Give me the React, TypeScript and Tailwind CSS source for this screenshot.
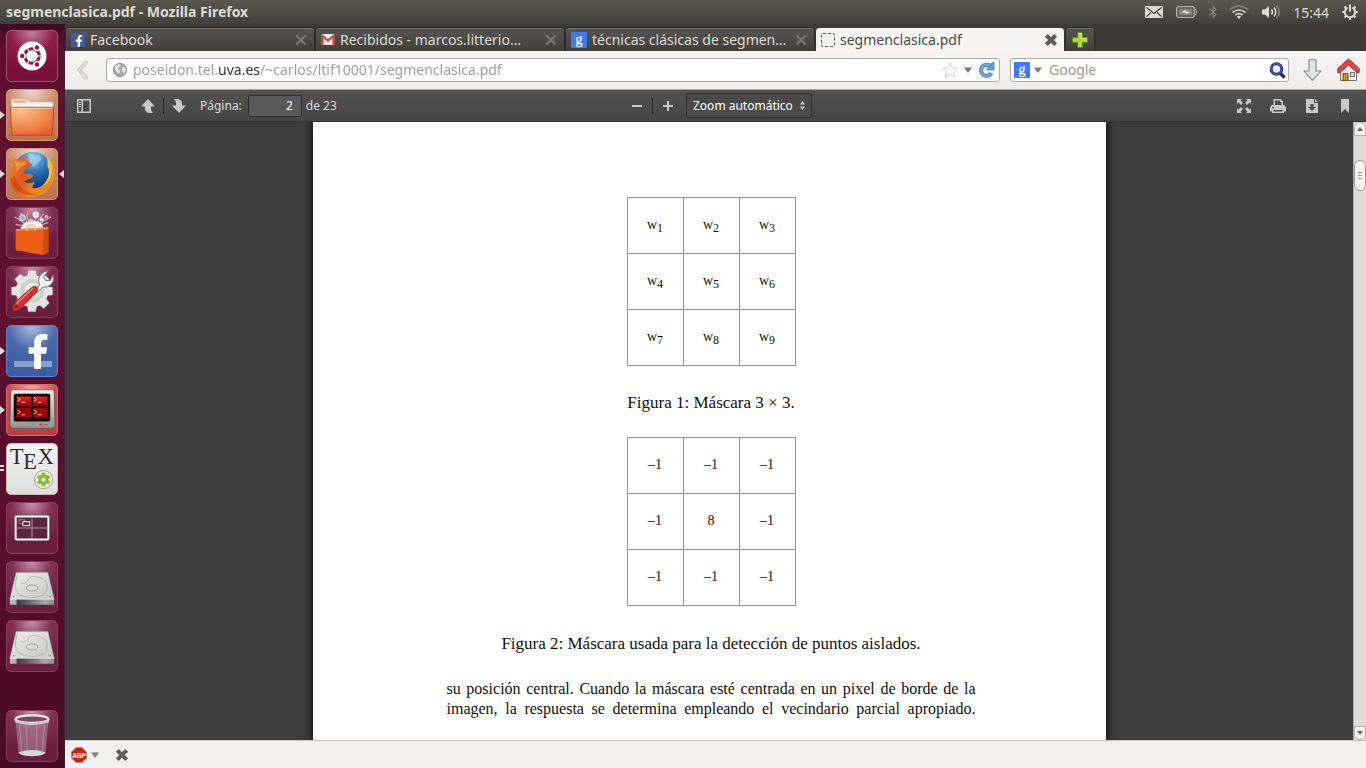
import React from "react";
import { FaFacebookF } from "react-icons/fa";

const ui = "font-['Noto_Sans',sans-serif]";

/* ---------- launcher icons (52 x 52 grid) ---------- */

function Art({ children }: { children: React.ReactNode }) {
  return (
    <svg viewBox="0 0 52 52" className="size-full" aria-hidden="true">
      {children}
    </svg>
  );
}

const DashIcon = () => (
  <Art>
    <circle cx="26" cy="26" r="15" fill="#fff" />
    <circle cx="26" cy="26" r="7.6" fill="none" stroke="#8b1b48" strokeWidth="3.2" />
    {[180, 300, 60].map((a) => (
      <g key={a} transform={`rotate(${a} 26 26)`}>
        <circle cx="36" cy="26" r="3.6" fill="#fff" />
        <circle cx="36.2" cy="26" r="2.3" fill="#8b1b48" />
      </g>
    ))}
    {[0, 120, 240].map((a) => (
      <path key={a} d="M30 26h8" transform={`rotate(${a} 26 26)`} stroke="#fff" strokeWidth="1.2" />
    ))}
  </Art>
);

const FolderIcon = () => (
  <Art>
    <defs>
      <radialGradient id="fold" cx="0.25" cy="0.1" r="1.1">
        <stop offset="0" stopColor="#f9c48a" />
        <stop offset="0.55" stopColor="#f08a4c" />
        <stop offset="1" stopColor="#e8542a" />
      </radialGradient>
    </defs>
    <path d="M4.500 11.500q0-2 2-2h14l3.500 3h23q1 0 1 1V20h-43.500z" fill="#f4f1ee" stroke="#c9b8ac" strokeWidth=".7" />
    <rect x="6.500" y="11" width="13" height="2.200" fill="#f2a26c" />
    <path d="M3.500 18h45l-1.500 29h-42z" fill="url(#fold)" stroke="#b5441c" strokeWidth=".9" />
    <path d="M4.500 19h43" stroke="#ffd9b0" strokeWidth=".8" />
  </Art>
);

const FirefoxIcon = () => (
  <Art>
    <defs>
      <radialGradient id="globe" cx="0.5" cy="0.15" r="0.85">
        <stop offset="0" stopColor="#8fd0f2" />
        <stop offset="0.45" stopColor="#2f74b8" />
        <stop offset="1" stopColor="#0a2c68" />
      </radialGradient>
      <linearGradient id="fox" x1="0" y1="0" x2="1" y2="1">
        <stop offset="0" stopColor="#f08a30" />
        <stop offset="0.5" stopColor="#e0561b" />
        <stop offset="1" stopColor="#f7a422" />
      </linearGradient>
    </defs>
    <circle cx="27" cy="23" r="20" fill="url(#globe)" />
    <path d="M22 5q5-1 7 2l5-1 2 5-4 3-3 5-4-2-2-6z" fill="#bfe3f6" opacity=".4" />
    <path d="M41 8q2 5 1 9 4 9-1 16-4 7-11 8-3 5-9 6 15 4 22-6 8-9 5-21-2-7-7-12z" fill="#f8c430" />
    <path d="M47 18q1 13-7 19-5 4-12 4l-4 7q13 1 20-8 7-9 3-22z" fill="#ee8420" />
    <path d="M6 8q4 4 8 3l7-4q-1 4 1 6l4 3q-1 3-6 4-3 2-2 6 4-1 9 1 0 3-4 4-3 1-5 3 4 3 11 0l-3 6q3 2 7 1-4 6-10 6 3 2 8 1-7 4-15 2Q4 46 3 31 2 24 5 19l1 2q-2-6 0-13z" fill="url(#fox)" />
    <path d="M3 29q2 12 13 17 8 3 15 1-11-1-16-7-6-6-7-12l-3 3z" fill="#c7400f" opacity=".65" />
    <path d="M8 12q4 3 8 2l3-2v4q-6 2-9 8z" fill="#f8b05c" opacity=".6" />
  </Art>
);

const BagIcon = () => (
  <Art>
    <path d="M26 21 8 9M26 21 14 5M26 21 20 7M26 21 32 5M26 21 38 6M26 21 46 9M26 21 43 15M26 21 9 17" stroke="#e7c6d2" strokeWidth="1.300" opacity=".75" />
    <path d="M14 22q3-9 8-7 3-5 7-1 6-2 9 7z" fill="#fff5ee" />
    <circle cx="16" cy="10" r="3" fill="#8fb3d0" stroke="#e8eef2" />
    <circle cx="30" cy="7" r="3" fill="#d9d9d9" stroke="#fff" />
    <circle cx="41" cy="9" r="2" fill="#cbb3bf" />
    <circle cx="22" cy="6" r="1.600" fill="#f08b60" />
    <circle cx="36" cy="12" r="2.200" fill="#eadfe4" />
    <circle cx="25" cy="13" r="2" fill="#b7cddb" />
    <path d="m9 22 34-2v26l-6 3-28-5z" fill="#ee5b14" />
    <path d="m38 20 5 0v26l-6 3z" fill="#d04a0c" />
    <path d="m9 22 34-2-1 2-32 2z" fill="#f88b4d" />
    <path d="M21 24v-4q0-2 2-2h4q2 0 2 2v4" fill="none" stroke="#f7c5a5" strokeWidth="1.600" />
  </Art>
);

const SettingsIcon = () => (
  <Art>
    <g fill="#e4e4e2" stroke="#8b8b89" strokeWidth=".4">
      {[0, 45, 90, 135, 180, 225, 270, 315].map((a) => (
        <path key={a} d="M21 10 22 3.500h8L31 10z" transform={`rotate(${a} 26 25)`} />
      ))}
      <circle cx="26" cy="25" r="17" stroke="none" />
    </g>
    <circle cx="26" cy="25" r="12.500" fill="#cfcfcd" />
    <circle cx="26" cy="25" r="8" fill="#f0f0ee" />
    <path d="m28 25 6-6q-3-7 2-12 3-3 7-3l-5 6 2 4 5 0 3-6q2 6-2 10-4 4-9 3l-6 6z" fill="#f2f2f0" stroke="#767674" strokeWidth="1" />
    <path d="M6 44q-2-3 2-7l18-16q3-2 5 0t0 5L13 44q-4 4-7 0z" fill="#d3302c" stroke="#8a1414" strokeWidth=".8" />
    <path d="M10 38 27 22" stroke="#f08a80" strokeWidth="1.500" />
    <circle cx="9.500" cy="41.500" r="1.500" fill="#5d0b0b" />
  </Art>
);

const FacebookTile = () => (
  <div className="relative flex size-full items-start justify-end">
    <span className="absolute bottom-[9px] left-[7px] h-[6px] w-[38px] bg-[#8ba0d0]" />
    <FaFacebookF className="relative mt-[8px] mr-[8px] h-[35px] w-[22px] text-white" aria-hidden="true" />
  </div>
);

const TerminalIcon = () => (
  <Art>
    <defs>
      <linearGradient id="mon" x1="0" y1="0" x2="0" y2="1">
        <stop offset="0" stopColor="#f0efeb" />
        <stop offset="1" stopColor="#92918b" />
      </linearGradient>
      <linearGradient id="pane" x1="0" y1="0" x2="0" y2="1">
        <stop offset="0" stopColor="#f0201c" />
        <stop offset="1" stopColor="#8c0405" />
      </linearGradient>
    </defs>
    <path d="M6 5h41q2 0 2 3l1 34q0 3-4 3H7q-4 0-4-3L4 8q0-3 2-3z" fill="url(#mon)" stroke="#55544f" strokeWidth=".7" />
    <rect x="7" y="9" width="38" height="29" rx="2" fill="#190303" />
    <path d="M10 12h15v10H10zM27 12h15v10H27z" fill="url(#pane)" />
    <path d="M10 24h15v10H10zM27 24h15v10H27z" fill="#990708" />
    {[[11, 13], [28, 13], [11, 26], [28, 26]].map(([x, y]) => (
      <path key={`${x}-${y}`} d={`m${x} ${y} 3 2-3 2m4 1h4`} fill="none" stroke="#ffb9ad" strokeWidth="1" />
    ))}
    <circle cx="35" cy="41" r="1.200" fill="#e2231a" />
    <path d="M38 41h4" stroke="#66655f" />
  </Art>
);

const TexIcon = () => (
  <Art>
    <g fill="#2d2d2d" fontFamily="Liberation Serif, serif" fontSize="23">
      <text x="3" y="21">T</text>
      <text x="17" y="26">E</text>
      <text x="32" y="21">X</text>
    </g>
    <circle cx="38" cy="37" r="9.500" fill="#e9e9e5" stroke="#a3a39c" strokeWidth="1" />
    <g fill="#86bd2a">
      {[0, 60, 120, 180, 240, 300].map((a) => (
        <path key={a} d="M35.500 33.500 36.500 30h3l1 3.500z" transform={`rotate(${a} 38 37)`} />
      ))}
    </g>
    <circle cx="38" cy="37" r="3.500" fill="none" stroke="#86bd2a" strokeWidth="2.500" />
  </Art>
);

const WorkspaceIcon = () => (
  <Art>
    <rect x="9" y="14" width="34" height="24" rx=".5" fill="#5a2440" stroke="#fff" strokeWidth="2" />
    <path d="M26 15v22M10 26h32" stroke="#b39aa6" strokeWidth="1" />
    <rect x="12.500" y="17.500" width="6" height="4" fill="none" stroke="#a58c99" />
    <rect x="16.500" y="19.500" width="7" height="4" fill="#5a2440" stroke="#fff" />
  </Art>
);

const DriveIcon = () => (
  <Art>
    <defs>
      <linearGradient id="drv" x1="0" y1="0" x2="1" y2="1">
        <stop offset="0" stopColor="#eeeeec" />
        <stop offset="1" stopColor="#c6c6c4" />
      </linearGradient>
      <linearGradient id="edge">
        <stop offset="0" stopColor="#b5b5b3" />
        <stop offset=".12" stopColor="#b5b5b3" />
        <stop offset=".18" stopColor="#3c3c3c" />
        <stop offset=".8" stopColor="#a8a8a6" />
        <stop offset="1" stopColor="#8d8d8b" />
      </linearGradient>
    </defs>
    <path d="M9.500 11h33l6.500 27.500H3z" fill="url(#drv)" stroke="#a0a09e" strokeWidth=".5" />
    <path d="M3 38.500h46v6H3z" fill="url(#edge)" />
    <path d="M3 38.500h46" stroke="#fafafa" />
    <path d="M11 13q-5 14 1 20 5 4 14 4 16 0 16-12 0-9-15-10-4 0-6 5-2 3-7 2" fill="none" stroke="#b2b2b0" strokeWidth=".9" />
    <ellipse cx="26" cy="27" rx="6" ry="3.200" fill="#dcdcda" stroke="#989896" strokeWidth=".9" />
    <circle cx="7" cy="36" r=".8" fill="#777" />
    <circle cx="45" cy="36" r=".8" fill="#777" />
  </Art>
);

const TrashIcon = () => (
  <Art>
    <path d="m9 10 3 34q14 6 28 0l3-34z" fill="#b78fa2" opacity=".55" />
    <path d="m13 14 2 27M20 15l1 27M31 15v27M39 14l-2 27" stroke="#d9c2cd" strokeWidth=".8" opacity=".5" />
    <path d="M12 43q14-5 28 0-2 4-14 4t-14-4z" fill="#d5d9d3" />
    <ellipse cx="26" cy="8.500" rx="17" ry="4" fill="#7a4a60" stroke="#e9ebe7" strokeWidth="2.500" />
    <path d="M8.500 9v3q17 5 35 0V9q-17 6-35 0z" fill="#cdd0ca" />
  </Art>
);

type App = { name: string; tile: string; mark?: "run" | "active" | "double"; icon: React.ReactNode };

const glass = "bg-[radial-gradient(circle_at_50%_0%,#c793a8_0%,#803257_35%,#6b1f40_70%)] border-[#8a3a5a]";
const copper = "bg-[radial-gradient(circle_at_50%_0%,#eed9cc_0%,#c98a68_45%,#b87049_100%)] border-[#d59a77]";

const apps: App[] = [
  { name: "Inicio", tile: "bg-[radial-gradient(circle_at_50%_0%,#c4809c_0%,#8b1d48_40%,#7a0e38_80%)] border-[#a84e72]", icon: <DashIcon /> },
  { name: "Archivos", tile: copper, mark: "run", icon: <FolderIcon /> },
  { name: "Firefox", tile: copper, mark: "active", icon: <FirefoxIcon /> },
  { name: "Centro de software", tile: glass, icon: <BagIcon /> },
  { name: "Configuración", tile: glass, icon: <SettingsIcon /> },
  { name: "Facebook", tile: "bg-[radial-gradient(circle_at_50%_0%,#a9bbe0_0%,#4767a8_45%,#3c5a9c_100%)] border-[#5d86d6]", mark: "run", icon: <FacebookTile /> },
  { name: "Terminator", tile: "bg-[radial-gradient(circle_at_50%_0%,#e9a8a8_0%,#c34a50_45%,#b83c44_100%)] border-[#d76a6c]", mark: "run", icon: <TerminalIcon /> },
  { name: "Texmaker", tile: "bg-[linear-gradient(#f4f4f2,#dededc)] border-[#c4c2ae]", mark: "double", icon: <TexIcon /> },
  { name: "Áreas de trabajo", tile: glass, icon: <WorkspaceIcon /> },
  { name: "Disco 1", tile: glass, icon: <DriveIcon /> },
  { name: "Disco 2", tile: glass, icon: <DriveIcon /> },
];

function Tile({ app }: { app: App }) {
  return (
    <li className="relative flex justify-center">
      {(app.mark === "run" || app.mark === "active") && (
        <svg viewBox="0 0 5 8" className="absolute top-[22px] left-0 h-2 w-[5px]" aria-hidden="true">
          <path d="M0 0v8l5-4z" fill="#dedbd8" />
        </svg>
      )}
      {app.mark === "active" && (
        <svg viewBox="0 0 5 8" className="absolute top-[22px] right-0 h-2 w-[5px]" aria-hidden="true">
          <path d="M5 0v8L0 4z" fill="#dedbd8" />
        </svg>
      )}
      {app.mark === "double" && <span className="absolute top-[22px] left-0 h-[6px] w-[4px] border-y-2 border-[#dedbd8]" />}
      <button aria-label={app.name} className={`size-[52px] overflow-hidden rounded-[5px] border ${app.tile}`}>
        {app.icon}
      </button>
    </li>
  );
}

/* ---------- small icons ---------- */

const CloseX = ({ className }: { className: string }) => (
  <svg viewBox="0 0 12 12" className={className} aria-hidden="true">
    <path d="m2 2 8 8M10 2l-8 8" stroke="currentColor" strokeLinecap="butt" />
  </svg>
);

const Caret = ({ className = "" }: { className?: string }) => (
  <svg viewBox="0 0 8 6" className={`h-[6px] w-2 ${className}`} aria-hidden="true">
    <path d="M0 .5h8L4 6z" fill="#7b7b78" />
  </svg>
);

const FacebookFav = () => (
  <span className="flex size-[14px] items-end justify-end bg-[#3f5aa0]">
    <FaFacebookF className="mr-[2px] h-[12px] w-[8px] text-white" aria-hidden="true" />
  </span>
);

const GmailFav = () => (
  <svg viewBox="0 0 14 12" className="h-3 w-[14px]" aria-hidden="true">
    <path d="M1 0h12v11H1z" fill="#f1eeec" />
    <path d="m1 11 5-5M13 11 8 6" stroke="#cfc9c6" strokeWidth=".8" />
    <path d="M0 1q0-1 1-1l6 5 6-5q1 0 1 1v10h-2.500V4L7 8 2.500 4v7H0z" fill="#da4437" />
  </svg>
);

const GoogleFav = () => (
  <svg viewBox="0 0 16 16" className="size-4" aria-hidden="true">
    <rect width="16" height="16" rx="1" fill="#4178f2" />
    <text x="8" y="12" textAnchor="middle" fontFamily="Liberation Serif, serif" fontSize="14" fill="#fff" stroke="#fff" strokeWidth=".3">g</text>
  </svg>
);

const DashedFav = () => <span className="size-[14px] rounded-[2px] border border-dashed border-[#5a5a58]" />;

const tabs = [
  { title: "Facebook", icon: <FacebookFav /> },
  { title: "Recibidos - marcos.litterio…", icon: <GmailFav /> },
  { title: "técnicas clásicas de segmen…", icon: <GoogleFav /> },
  { title: "segmenclasica.pdf", icon: <DashedFav />, active: true },
];

function SystemTray() {
  return (
    <div className="flex items-center gap-3">
      <svg viewBox="0 0 18 12" className="h-3 w-[18px]" aria-hidden="true">
        <rect width="18" height="12" rx="1" fill="#dfdbd2" />
        <path d="m1.500 1.500 7.500 6 7.500-6M1.500 10.500 6 6.500M16.500 10.500 12 6.500" fill="none" stroke="#45433d" strokeWidth="1.200" />
      </svg>
      <svg viewBox="0 0 21 12" className="ml-px h-3 w-[21px]" aria-hidden="true">
        <rect x=".7" y=".7" width="17.600" height="10.600" rx="2" fill="none" stroke="#b5b1a8" strokeWidth="1.300" />
        <rect x="2.500" y="2.500" width="14" height="7" fill="#85827a" />
        <path d="M19 3.500q1.500 0 1.500 1v3q0 1-1.500 1" fill="none" stroke="#b5b1a8" />
        <path d="m5 6.500 5-3-.5 2 5 .5-5 2.500.5-2z" fill="#efece6" />
      </svg>
      <svg viewBox="0 0 8 14" className="h-[14px] w-2" aria-hidden="true">
        <path d="m.5 3.500 6.500 6-3 3V1.500l3 3-6.500 6" fill="none" stroke="#8a877e" strokeWidth="1.100" />
      </svg>
      <svg viewBox="0 0 20 14" className="h-[14px] w-5" aria-hidden="true">
        <g fill="none" stroke="#dfdbd2" strokeWidth="1.600">
          <path d="M.8 4.500q9.200-7 18.400 0" stroke="#8a877e" />
          <path d="M3.500 7.500q6.500-5 13 0" />
          <path d="M6.300 10.200q3.700-3 7.400 0" />
        </g>
        <path d="M7.800 11.500q2.200-1.500 4.400 0L10 14z" fill="#dfdbd2" />
      </svg>
      <svg viewBox="0 0 20 16" className="h-4 w-5" aria-hidden="true">
        <path d="M1 5.500h3L8 2v12L4 10.500H1z" fill="#dfdbd2" />
        <g fill="none" strokeWidth="1.500">
          <path d="M10.500 5.500q2 2.500 0 5M13 3.500q3.600 4.500 0 9" stroke="#dfdbd2" />
          <path d="M15.500 1.500q5.500 6.500 0 13" stroke="#8a877e" />
        </g>
      </svg>
      <time className="mr-px text-[14px] text-[#dfdbd2]">15:44</time>
      <svg viewBox="0 0 16 16" className="size-4" aria-hidden="true">
        <g stroke="#dfdbd2" fill="none">
          <path d="M5.500 3.500a5.200 5.200 0 1 0 5 0" strokeWidth="2" />
          <path d="M8 .5v7" strokeWidth="2" />
          <path d="M.3 8h2M13.700 8h2M8 13.700v2M2.500 2.500 4 4M13.500 2.500 12 4M2.500 13.500 4 12M13.500 13.500 12 12" strokeWidth="2" />
        </g>
      </svg>
    </div>
  );
}

function TabStrip() {
  return (
    <div role="tablist" className="flex h-[27px] items-end gap-[2px] bg-[#3c3b37] pl-px">
      {tabs.map((t) => (
        <div
          key={t.title}
          className={`flex h-[23px] min-w-0 max-w-[248px] flex-1 items-center rounded-t-[4px] border-t pr-[6px] pl-[5px] ${
            t.active
              ? "border-white bg-[#f6f5f4] text-[#4c4c4c]"
              : "border-[#75746f] bg-[linear-gradient(#55544f,#403f3b)] text-[#dfdbd2] shadow-[0_0_1px_1px_#2b2a27]"
          }`}
        >
          <button role="tab" aria-selected={!!t.active} className="flex min-w-0 flex-1 items-center gap-[5px] text-left text-[14px] leading-[22px]">
            <span className="flex shrink-0">{t.icon}</span>
            <span className="truncate">{t.title}</span>
          </button>
          <button aria-label={`Cerrar ${t.title}`} className={t.active ? "text-[#5a5a58]" : "text-[#75736d]"}>
            <CloseX className={t.active ? "size-[14px] stroke-[3.5]" : "size-[14px] stroke-2"} />
          </button>
        </div>
      ))}
      <button aria-label="Pestaña nueva" className="flex h-[23px] w-[28px] items-center justify-center rounded-t-[4px] border-t border-[#75746f] bg-[linear-gradient(#55544f,#403f3b)] shadow-[0_0_1px_1px_#2b2a27]">
        <svg viewBox="0 0 16 16" className="size-4" aria-hidden="true">
          <path d="M5.500.5h5v5h5v5h-5v5h-5v-5h-5v-5h5z" fill="#b5d63a" stroke="#5f8712" />
          <path d="M6.500 1.500h3v5h5" fill="none" stroke="#e3f09a" />
        </svg>
      </button>
    </div>
  );
}

function NavBar() {
  return (
    <nav className="flex h-[39px] items-center border-b border-[#a9a7a2] bg-[linear-gradient(#f6f5f4,#efedeb)] pr-[6px] pl-[11px]">
      <button aria-label="Atrás" className="mr-[17px]">
        <svg viewBox="0 0 13 20" className="h-5 w-[13px]" aria-hidden="true">
          <path d="M10 2.500 3.500 10l6.500 7.500" fill="none" stroke="#c4c3c1" strokeWidth="4" strokeLinecap="round" strokeLinejoin="round" />
          <path d="M10 2.500 3.500 10l6.500 7.500" fill="none" stroke="#dddcda" strokeWidth="2.500" strokeLinecap="round" strokeLinejoin="round" />
        </svg>
      </button>
      <div className="flex h-6 min-w-0 flex-1 items-center rounded-[3px] border border-[#aeaca8] bg-white pr-1 pl-[6px]">
        <svg viewBox="0 0 14 14" className="size-[14px] shrink-0" aria-hidden="true">
          <circle cx="7" cy="7" r="6.500" fill="#a9a9a9" stroke="#8b8b8b" />
          <path d="M2 4q2-3 5-3l1 2-2 1-1 2 2 2-1 3-2-2-2-2zM9 4l3 0 1 3-2 4-2-3z" fill="#e6e6e6" />
        </svg>
        <input
          aria-label="Dirección"
          defaultValue="poseidon.tel.uva.es/~carlos/ltif10001/segmenclasica.pdf"
          className="ml-[6px] min-w-0 flex-1 bg-[linear-gradient(90deg,#9a9a98_86px,#2e2e2e_86px,#2e2e2e_127px,#9a9a98_127px)] bg-clip-text text-[14px] leading-[20px] text-transparent caret-black outline-none"
        />
        <button aria-label="Marcador">
          <svg viewBox="0 0 16 16" className="size-4" aria-hidden="true">
            <path d="m8 1 2.200 4.700 5.100.6-3.800 3.500 1 5.100L8 12.400l-4.500 2.500 1-5.100L.7 6.300l5.100-.6z" fill="#fff" stroke="#cbcbcb" strokeLinejoin="round" />
          </svg>
        </button>
        <button aria-label="Historial" className="mx-[6px]"><Caret /></button>
        <button aria-label="Recargar">
          <svg viewBox="0 0 17 17" className="size-[17px]" aria-hidden="true">
            <path d="M12.500 4.200A5.600 5.600 0 1 0 13.500 11" fill="none" stroke="#3f79b8" strokeWidth="4" />
            <path d="M12.500 4.200A5.600 5.600 0 1 0 13.500 11" fill="none" stroke="#76a9da" strokeWidth="2.200" />
            <path d="M9 8V6.500l3-1.500L13.500 1 16 .5V8z" fill="#6ca2d6" stroke="#3f79b8" strokeWidth=".8" />
          </svg>
        </button>
      </div>
      <div className="ml-[10px] flex h-6 w-[279px] shrink items-center rounded-[3px] border border-[#aeaca8] bg-white pr-[2px] pl-[3px]">
        <GoogleFav />
        <button aria-label="Buscadores" className="ml-1"><Caret /></button>
        <input aria-label="Buscar" placeholder="Google" className="ml-[7px] min-w-0 flex-1 text-[14px] leading-[20px] outline-none placeholder:text-[#9a9a98]" />
        <button aria-label="Buscar ahora">
          <svg viewBox="0 0 17 17" className="size-[17px]" aria-hidden="true">
            <path d="m11 11 4.500 4.500" stroke="#2e2e2e" strokeWidth="3.200" />
            <circle cx="7.500" cy="7" r="5.300" fill="#eef3fb" stroke="#232f7c" strokeWidth="3" />
            <circle cx="7.500" cy="7" r="5.300" fill="none" stroke="#5167bf" strokeWidth="1" />
          </svg>
        </button>
      </div>
      <button aria-label="Descargas" className="ml-[14px]">
        <svg viewBox="0 0 19 22" className="h-[22px] w-[19px]" aria-hidden="true">
          <path d="M6 .7h7V12h5L9.500 21.300 1 12h5z" fill="#dfe4e7" stroke="#7f868a" strokeWidth="1.100" strokeLinejoin="round" />
        </svg>
      </button>
      <button aria-label="Inicio" className="ml-[15px]">
        <svg viewBox="0 0 23 24" className="h-6 w-[23px]" aria-hidden="true">
          <path d="M3.500 11 11.500 4l8 7v11.500h-16z" fill="#efefed" stroke="#6f6f6d" />
          <path d="M6 15.500h5v7H6z" fill="#d0871d" stroke="#7d4a08" />
          <rect x="13.500" y="14.500" width="4" height="4" fill="#cfe0ec" stroke="#68737c" />
          <path d="M11.500 1 .8 10.500v4h2L11.500 7l8.700 7.500h2v-4z" fill="#d9494c" stroke="#9c2023" strokeWidth=".9" strokeLinejoin="round" />
        </svg>
      </button>
    </nav>
  );
}

function PdfToolbar() {
  const ico = "fill-[#c8c8c8]";
  return (
    <div className="grid h-8 grid-cols-[1fr_auto_1fr] items-center border-b border-[#333] bg-[linear-gradient(#525252,#454545)] text-[12px] text-[#d9d9d9]">
      <div className="flex items-center pl-3">
        <button aria-label="Panel lateral">
          <svg viewBox="0 0 14 14" className="size-[14px]" aria-hidden="true">
            <path d="M0 0h14v14H0zM1.500 1.500v11h3v-11zM6 1.500v11h6.500v-11z" fillRule="evenodd" className={ico} />
            <path d="M2 3h2v1H2zm0 2h2v1H2zm0 2h2v1H2z" className={ico} />
          </svg>
        </button>
        <button aria-label="Anterior" className="ml-[50px]">
          <svg viewBox="0 0 14 14" className="size-[14px]" aria-hidden="true">
            <path d="M7 0l7 7.500h-4V10q0 2 2 4H8q-4-1-4-4V7.500H0z" className={ico} />
          </svg>
        </button>
        <span className="mx-2 h-4 w-px bg-[#262626]" />
        <button aria-label="Siguiente">
          <svg viewBox="0 0 14 14" className="size-[14px]" aria-hidden="true">
            <path d="M7 14l7-7.500h-4V4Q10 1 6 0H2q2 2 2 4v2.500H0z" className={ico} />
          </svg>
        </button>
        <label htmlFor="page" className="ml-[14px]">Página:</label>
        <input id="page" defaultValue="2" className="ml-[6px] h-[22px] w-[54px] rounded-[2px] border border-[#2e2e2e] bg-[#5a5a5a] pr-2 text-right text-[12px] text-white outline-none" />
        <span className="ml-1">de 23</span>
      </div>
      <div className="flex items-center pl-3">
        <button aria-label="Reducir">
          <svg viewBox="0 0 12 12" className="size-3" aria-hidden="true"><path d="M1 5h10v2H1z" className={ico} /></svg>
        </button>
        <span className="mx-[9px] h-4 w-px bg-[#262626]" />
        <button aria-label="Ampliar">
          <svg viewBox="0 0 12 12" className="size-3" aria-hidden="true"><path d="M1 5h4V1h2v4h4v2H7v4H5V7H1z" className={ico} /></svg>
        </button>
        <div className="relative ml-3">
          <select aria-label="Zoom" className="h-[25px] w-[126px] appearance-none rounded-[2px] border border-[#2e2e2e] bg-[#4a4a4a] pl-[6px] text-[12px] text-white outline-none">
            <option>Zoom automático</option>
          </select>
          <svg viewBox="0 0 5 9" className="pointer-events-none absolute top-2 right-[7px] h-[9px] w-[5px]" aria-hidden="true">
            <path d="M0 3.500 2.500 0 5 3.500zM0 5.500h5L2.500 9z" className={ico} />
          </svg>
        </div>
      </div>
      <div className="flex items-center justify-end gap-[19px] pr-[14px]">
        <button aria-label="Pantalla completa">
          <svg viewBox="0 0 14 14" className="size-[14px]" aria-hidden="true">
            <path d="M0 0h5L3.500 1.500 6 4 4 6 1.500 3.500 0 5zM14 0v5l-1.500-1.500L10 6 8 4l2.500-2.500L9 0zM0 14V9l1.500 1.500L4 8l2 2-2.500 2.500L5 14zM14 14H9l1.500-1.500L8 10l2-2 2.500 2.500L14 9z" className={ico} />
          </svg>
        </button>
        <button aria-label="Imprimir">
          <svg viewBox="0 0 16 14" className="h-[14px] w-4" aria-hidden="true">
            <path d="M3.500 0h7L13 2.500V6h1l2 2v3.500q0 1-1 1h-1V14H2v-1.500H1q-1 0-1-1V8l2-2h1.500zM5 1.500V6h6.500V3H10V1.500zM2 8v1.200h2V8zM3.500 11v1.500h9V11z" fillRule="evenodd" className={ico} />
          </svg>
        </button>
        <button aria-label="Descargar">
          <svg viewBox="0 0 14 14" className="size-[14px]" aria-hidden="true">
            <path d="M1 0h8v4h4v10H1zM5.500 5v3H3L7 12l4-4H8.500V5zM10 0l3 3h-3z" fillRule="evenodd" className={ico} />
          </svg>
        </button>
        <button aria-label="Marcador de vista">
          <svg viewBox="0 0 14 14" className="size-[14px]" aria-hidden="true">
            <path d="M3 0h8v14L7 10l-4 4z" className={ico} />
          </svg>
        </button>
      </div>
    </div>
  );
}

function Mask({ rows, label }: { rows: React.ReactNode[][]; label: string }) {
  return (
    <table aria-label={label} className="mx-auto border-collapse text-center text-[14px] leading-5">
      <tbody>
        {rows.map((r, i) => (
          <tr key={i} className="h-14">
            {r.map((c, j) => (
              <td key={j} className="w-14 min-w-14 border border-[#939393] p-0 pb-[2px]">{c}</td>
            ))}
          </tr>
        ))}
      </tbody>
    </table>
  );
}

const w = (n: number) => (
  <>
    w<sub className="text-[12px] leading-none">{n}</sub>
  </>
);

function Viewer() {
  return (
    <main className="flex min-h-0 flex-1 bg-[#3d3d3d]">
      <div className="flex min-w-0 flex-1 justify-center overflow-hidden">
        <article className="w-full max-w-[793px] bg-white pt-[75px] pr-[130px] pl-[134px] font-['Liberation_Serif',serif] text-[17px] leading-5 text-[#111] shadow-[0_0_8px_2px_rgba(0,0,0,0.7)]">
          <figure>
            <Mask label="Máscara 3 × 3" rows={[[w(1), w(2), w(3)], [w(4), w(5), w(6)], [w(7), w(8), w(9)]]} />
            <figcaption className="mt-[27px] text-center">Figura 1: Máscara 3 × 3.</figcaption>
          </figure>
          <figure className="mt-6">
            <Mask label="Detección de puntos" rows={[["–1", "–1", "–1"], ["–1", "8", "–1"], ["–1", "–1", "–1"]]} />
            <figcaption className="mt-7 text-center">Figura 2: Máscara usada para la detección de puntos aislados.</figcaption>
          </figure>
          <p className="mt-[25px] text-justify text-[16px] [text-align-last:justify]">
            su posición central. Cuando la máscara esté centrada en un pixel de borde de la<br />
            imagen, la respuesta se determina empleando el vecindario parcial apropiado.
          </p>
        </article>
      </div>
      <div className="flex w-[13px] flex-col border-l border-[#b3b1ad] bg-[#dedcda]">
        <button aria-label="Subir" className="flex h-[14px] items-center justify-center rounded-t-full border border-[#b3b1ad] bg-[#f4f3f2]">
          <svg viewBox="0 0 6 4" className="h-1 w-[6px]" aria-hidden="true"><path d="M0 4h6L3 0z" fill="#666" /></svg>
        </button>
        <div className="flex-1 pt-6">
          <div className="flex h-[31px] flex-col items-center justify-center gap-[2px] rounded-full border border-[#98968f] bg-[#f6f5f4]">
            <span className="h-px w-1 bg-[#999]" />
            <span className="h-px w-1 bg-[#999]" />
            <span className="h-px w-1 bg-[#999]" />
          </div>
        </div>
        <button aria-label="Bajar" className="flex h-[14px] items-center justify-center rounded-b-full border border-[#b3b1ad] bg-[#f4f3f2]">
          <svg viewBox="0 0 6 4" className="h-1 w-[6px]" aria-hidden="true"><path d="M0 0h6L3 4z" fill="#666" /></svg>
        </button>
      </div>
    </main>
  );
}

export default function App() {
  return (
    <div className={`flex h-screen flex-col overflow-hidden ${ui}`}>
      <header className="flex h-6 shrink-0 items-center justify-between bg-[linear-gradient(#5b584c,#403f3a)] pr-2 pl-[6px] text-[#dfdbd2]">
        <h1 className="text-[14px] leading-6 font-bold">segmenclasica.pdf - Mozilla Firefox</h1>
        <SystemTray />
      </header>
      <div className="flex min-h-0 flex-1">
        <aside className="flex w-[65px] shrink-0 flex-col justify-between border-r border-[#3c1f30] bg-[linear-gradient(#3e0a20,#5f0f2f_3%,#5a0f2e_60%,#480a28)] pt-[6px] pb-[6px]">
          <ul className="flex flex-col gap-[7px]">
            {apps.map((a) => <Tile key={a.name} app={a} />)}
          </ul>
          <ul>
            <Tile app={{ name: "Papelera", tile: glass, icon: <TrashIcon /> }} />
          </ul>
        </aside>
        <div className="flex min-w-0 flex-1 flex-col">
          <TabStrip />
          <NavBar />
          <PdfToolbar />
          <Viewer />
          <footer className="flex h-7 shrink-0 items-center border-t border-[#c8c6c3] bg-[#f2f1f0] pl-[6px]">
            <button aria-label="Adblock Plus" className="flex items-center gap-1">
              <svg viewBox="0 0 16 16" className="size-4" aria-hidden="true">
                <path d="M5 .5h6L15.500 5v6L11 15.500H5L.5 11V5z" fill="#cf1f12" stroke="#8e8e8c" />
                <text x="8" y="10.500" textAnchor="middle" fontFamily="Liberation Sans, sans-serif" fontSize="6.500" fontWeight="bold" fill="#fff">ABP</text>
              </svg>
              <Caret />
            </button>
            <button aria-label="Cerrar barra" className="ml-4 text-[#5f5f5d]">
              <CloseX className="size-[14px] stroke-[3.5]" />
            </button>
          </footer>
        </div>
      </div>
    </div>
  );
}
